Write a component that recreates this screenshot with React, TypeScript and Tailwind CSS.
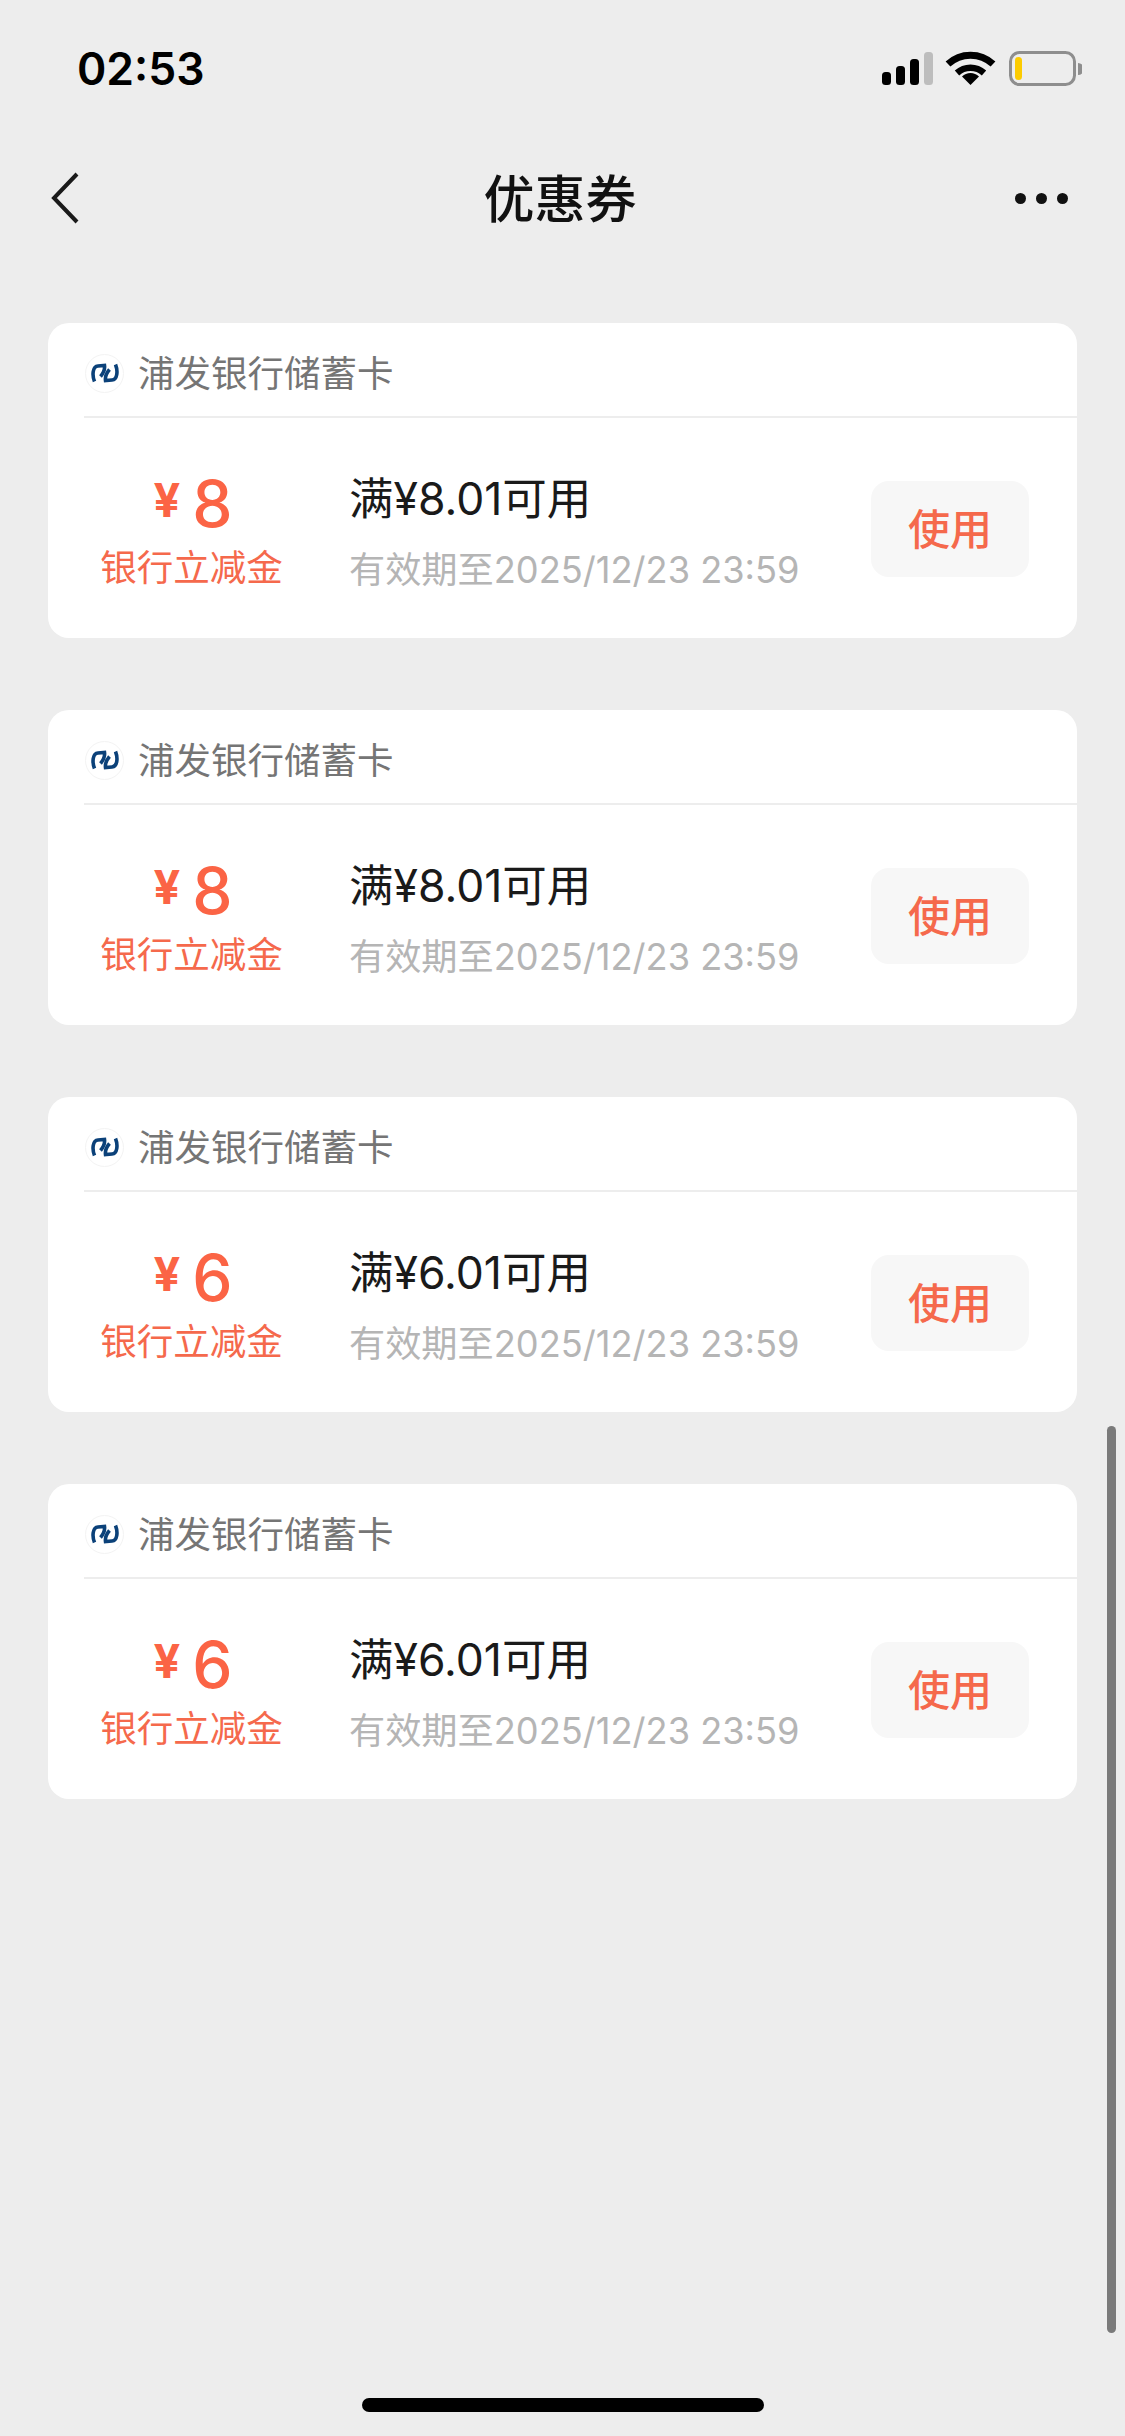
const CJK = "font-['Inter','Noto_Sans_CJK_SC',sans-serif]";

const coupons = [
  { amount: "8", min: "满¥8.01可用" },
  { amount: "8", min: "满¥8.01可用" },
  { amount: "6", min: "满¥6.01可用" },
  { amount: "6", min: "满¥6.01可用" },
];

function StatusIcons() {
  return (
    <svg width="202" height="36" viewBox="0 0 202 36" className="block">
      {/* signal */}
      <rect x="2" y="21" width="9" height="13" rx="3.5" fill="#000" />
      <rect x="16" y="15" width="9" height="19" rx="3.5" fill="#000" />
      <rect x="30" y="8" width="9" height="26" rx="3.5" fill="#000" />
      <rect x="44" y="1" width="9" height="33" rx="3.5" fill="#bdbdbd" />
      {/* wifi */}
      <path d="M68 13 A33 33 0 0 1 113 13" fill="none" stroke="#000" strokeWidth="7" />
      <path d="M77 22 A20 20 0 0 1 104 22" fill="none" stroke="#000" strokeWidth="6.5" />
      <path d="M90.5 34 L82 25.5 A12 12 0 0 1 99 25.5 Z" fill="#000" />
      {/* battery */}
      <rect x="130.5" y="1.5" width="64" height="32" rx="9" fill="none" stroke="#8e8e8e" strokeWidth="3" />
      <rect x="135" y="6" width="7" height="23" rx="3.5" fill="#fccb00" />
      <path d="M198 12 A6 6 0 0 1 198 24 Z" fill="#8e8e8e" />
    </svg>
  );
}

function BankLogo() {
  return (
    <div className="flex h-[39px] w-[39px] items-center justify-center rounded-full border border-[#f3f3f3] bg-white">
      <svg width="28" height="20" viewBox="0 0 28 20">
        <path d="M3.5 18.5 C1 12 1.5 3.5 7 3 L13.5 2.5 C14 6 12.5 10 9.5 13.5" fill="none" stroke="#0b4179" strokeWidth="3.6" />
        <path d="M24.5 1.5 C27 8 26.5 16.5 21 17 L14.5 17.5 C14 14 15.5 10 18.5 6.5" fill="none" stroke="#0b4179" strokeWidth="3.6" />
      </svg>
    </div>
  );
}

function CouponCard({ amount, min }: { amount: string; min: string }) {
  return (
    <div className="h-[315px] rounded-[21px] bg-white">
      {/* Card header */}
      <div className="ml-[36px] flex h-[95px] items-center gap-[14px] border-b-2 border-[#ededed] pt-[7px] pl-[1px]">
        <BankLogo />
        <span className="mt-[2px] text-[36.5px] leading-none text-[#757575]">浦发银行储蓄卡</span>
      </div>

      <div className="flex h-[220px] items-center pr-[48px]">
        <div className="mt-[7px] flex w-[287px] flex-col items-center">
          <div className="flex h-[60px] items-center gap-[12px] font-medium text-[#fb6445]">
            <span className="mb-[8px] ml-[3px] text-[47px] leading-none font-bold">¥</span>
            <span className="text-[64px] leading-none">{amount}</span>
          </div>
          <span className="mt-[12px] text-[36.5px] leading-[44px] text-[#f5694c]">银行立减金</span>
        </div>

        <div className="mt-[10px] flex-1 pl-[14px]">
          <div className="text-[44.5px] leading-[50px] text-[#1a1a1a]">{min}</div>
          <div className="mt-[24px] text-[36.2px] leading-[44px] text-[#b5b5b5]">有效期至2025/12/23 23:59</div>
        </div>

        <button className="mt-[2px] flex h-[96px] w-[158px] items-center justify-center rounded-[18px] bg-[#f7f7f7] text-[42px] font-medium text-[#f5694c]">
          使用
        </button>
      </div>
    </div>
  );
}

export default function App() {
  return (
    <div className={`relative h-[2436px] w-[1125px] overflow-hidden bg-[#ededed] ${CJK}`}>
      {/* Status bar */}
      <div className="flex h-[138px] items-center justify-between pr-[43px] pl-[77px]">
        <span className="text-[44.5px] leading-none font-semibold text-black">02:53</span>
        <StatusIcons />
      </div>

      {/* Nav bar */}
      <div className="grid h-[120px] grid-cols-3 items-center pr-[57px] pl-[50px]">
        <svg width="30" height="52" viewBox="0 0 30 52">
          <path d="M27 2 L4 26 L27 50" fill="none" stroke="#1a1a1a" strokeWidth="4" />
        </svg>
        <span className="mt-[2px] ml-[2px] text-center text-[51px] leading-none font-medium text-[#111]">优惠券</span>
        <div className="flex justify-end gap-[10px]">
          <span className="h-[11px] w-[11px] rounded-full bg-[#111]" />
          <span className="h-[11px] w-[11px] rounded-full bg-[#111]" />
          <span className="h-[11px] w-[11px] rounded-full bg-[#111]" />
        </div>
      </div>

      {/* Coupons */}
      <div className="mt-[65px] flex flex-col gap-[72px] pr-[48px] pl-[48px]">
        {coupons.map((c, i) => (
          <CouponCard key={i} amount={c.amount} min={c.min} />
        ))}
      </div>

      {/* Scrollbar + home indicator */}
      <div className="absolute top-[1426px] left-[1107px] h-[907px] w-[9px] rounded-full bg-[#7a7a7a]" />
      <div className="absolute top-[2398px] left-[362px] h-[14px] w-[402px] rounded-full bg-black" />
    </div>
  );
}
